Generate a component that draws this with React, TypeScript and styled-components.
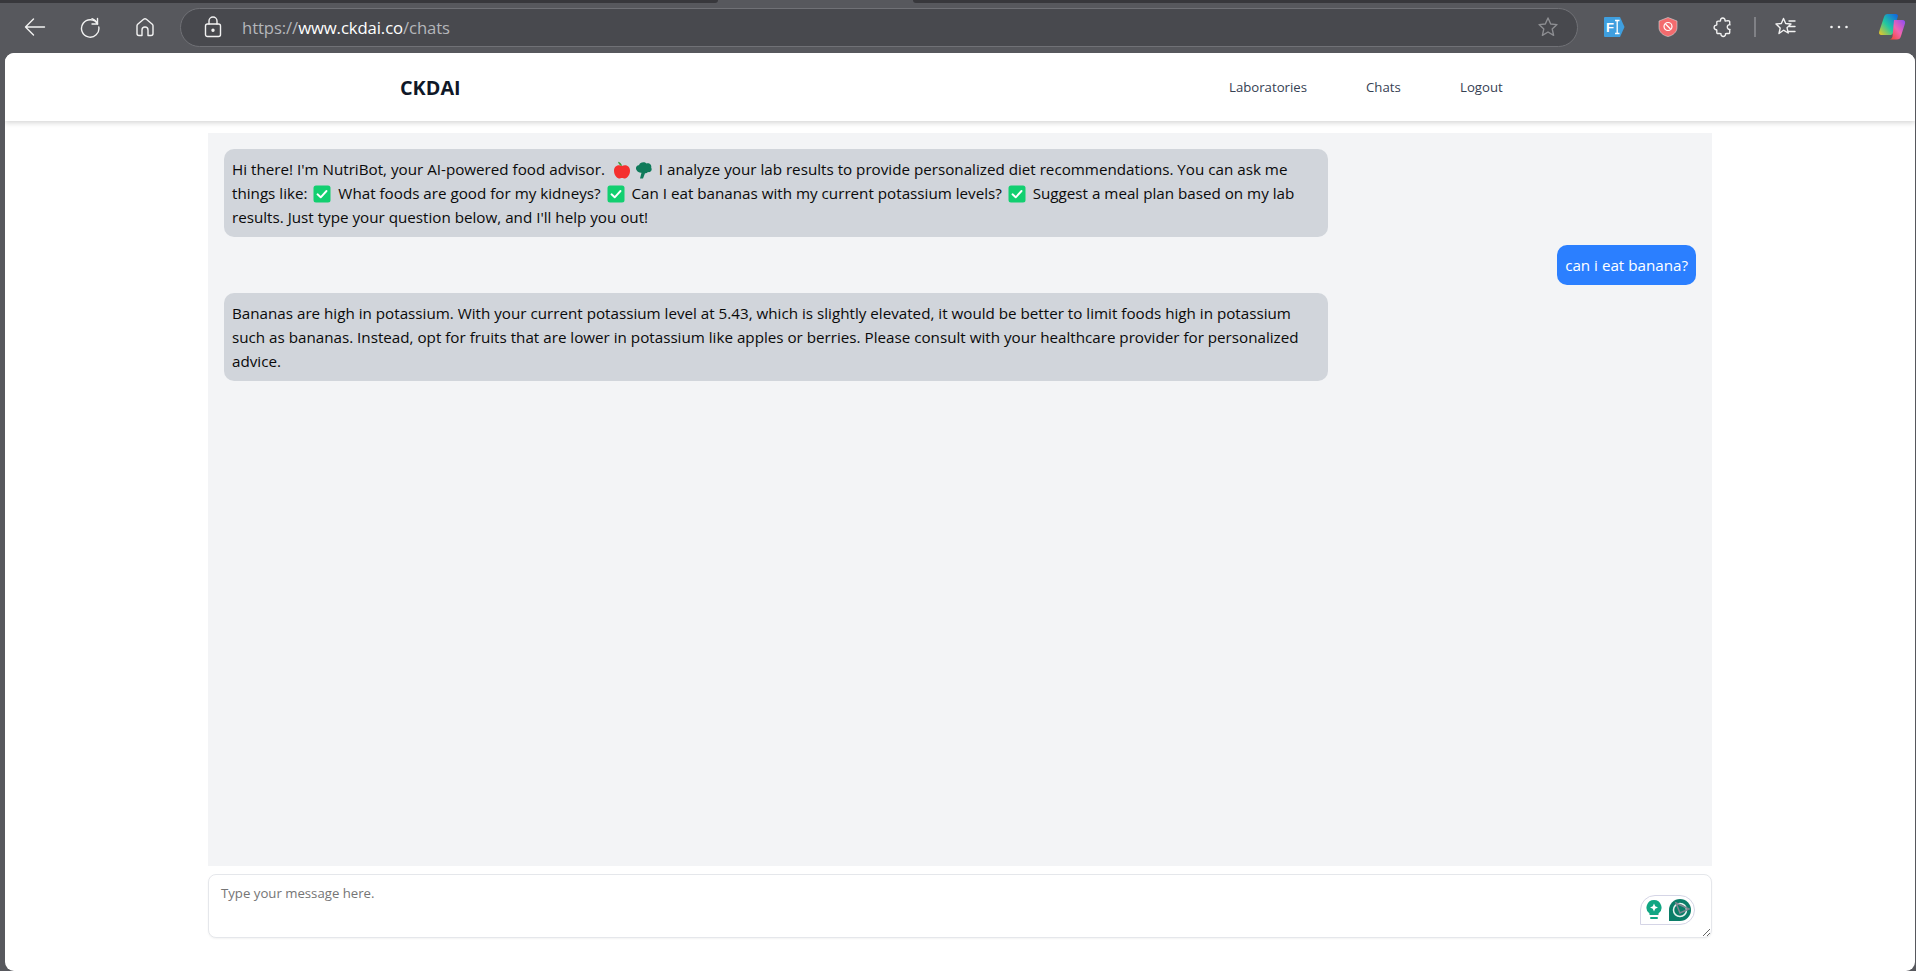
import React from "react";
import styled, { createGlobalStyle } from "styled-components";

const Global = createGlobalStyle`
  html, body { margin: 0; padding: 0; height: 100%; overflow: hidden; background: #57585d; }
  * { box-sizing: border-box; }
  #root { height: 100%; }
`;

const Shell = styled.div`
  height: 971px;
  display: flex;
  flex-direction: column;
  background: #57585d;
  font-family: "Open Sans", "Noto Sans", sans-serif;
`;
const TabStrip = styled.div`
  height: 3px;
  flex: none;
  display: flex;
  justify-content: space-between;
`;
const InactiveTab = styled.div<{ $right?: boolean }>`
  width: ${(p) => (p.$right ? 1003 : 718)}px;
  height: 3px;
  background: #38383c;
  border-radius: ${(p) => (p.$right ? "0 0 0 4px" : "0 0 4px 0")};
`;
const Toolbar = styled.div`
  height: 50px;
  flex: none;
  display: flex;
  align-items: center;
  padding: 0 10px 2px 24px;
`;
const NavIcon = styled.svg<{ $ml?: number }>`
  flex: none;
  margin-left: ${(p) => p.$ml ?? 0}px;
  fill: none;
  stroke: ${(p) => p.color || "#f2f2f2"};
  stroke-width: 1.4;
  stroke-linecap: round;
  stroke-linejoin: round;
`;
const ExtIcon = styled.svg<{ $ml: number }>`
  flex: none;
  margin-left: ${(p) => p.$ml}px;
`;
const AddressBar = styled.div`
  flex: none;
  width: 1398px;
  height: 39px;
  margin-left: 25px;
  border: 1.5px solid #707176;
  border-radius: 20px;
  background: #48494e;
  display: flex;
  align-items: center;
  padding: 0 18px 0 23px;
`;
const Url = styled.div`
  flex: 1;
  margin-left: 20px;
  font-size: 16.7px;
  color: #b4b6ba;
  letter-spacing: -0.1px;
`;
const UrlHost = styled.span`
  color: #ffffff;
`;
const Divider = styled.div`
  flex: none;
  width: 2px;
  height: 20px;
  margin-left: 21px;
  background: #808186;
`;
const Page = styled.div`
  flex: 1;
  min-height: 0;
  margin-left: 5px;
  margin-right: 1px;
  background: #ffffff;
  border-radius: 9px;
  display: flex;
  flex-direction: column;
  overflow: hidden;
`;
const TopNav = styled.nav`
  flex: none;
  height: 68px;
  display: flex;
  align-items: center;
  padding-left: 395px;
  background: #fff;
  box-shadow: 0 2px 5px rgba(0, 0, 0, 0.16);
`;
const Brand = styled.div`
  font-size: 19.8px;
  font-weight: 700;
  color: #101828;
  width: 829px;
`;
const NavLink = styled.a<{ $w: number }>`
  width: ${(p) => p.$w}px;
  font-size: 13.2px;
  color: #364153;
`;
const Main = styled.main`
  flex: 1;
  min-height: 0;
  width: 1504px;
  margin-left: 203px;
  padding-top: 12px;
  display: flex;
  flex-direction: column;
`;
const Messages = styled.div`
  height: 733px;
  flex: none;
  background: #f3f4f6;
  padding: 16px;
  display: flex;
  flex-direction: column;
  gap: 8px;
`;
const Bubble = styled.div<{ $user?: boolean }>`
  max-width: 75%;
  align-self: ${(p) => (p.$user ? "flex-end" : "flex-start")};
  background: ${(p) => (p.$user ? "#2b7fff" : "#d1d5db")};
  color: ${(p) => (p.$user ? "#ffffff" : "#0a0a0a")};
  border-radius: 10px;
  padding: 8px;
  font-size: 15.2px;
  line-height: 24px;
`;
const Emoji = styled.svg<{ $ml: number; $mr: number }>`
  display: inline-block;
  width: 18px;
  height: 18px;
  margin: 0 ${(p) => p.$mr}px 0 ${(p) => p.$ml}px;
  vertical-align: -4px;
`;
const InputWrap = styled.div`
  position: relative;
  margin-top: 8px;
  height: 64px;
`;
const Input = styled.textarea`
  display: block;
  width: 100%;
  height: 64px;
  border: 1px solid #e5e7eb;
  border-radius: 8px;
  padding: 8px 12px;
  font: 13.2px/20px "Open Sans", sans-serif;
  outline: none;
  background: #fff;
  box-shadow: 0 1px 2px rgba(0, 0, 0, 0.05);
  &::placeholder { color: #757575; opacity: 1; }
`;
const Grammarly = styled.div`
  position: absolute;
  right: 17px;
  top: 21px;
  width: 55px;
  height: 30px;
  background: #fff;
  border: 1px solid #d5d5e6;
  border-radius: 15px 15px 15px 0;
  display: flex;
  align-items: center;
  justify-content: flex-end;
  gap: 7px;
  padding-right: 3px;
`;

const Apple = () => (
  <Emoji $ml={4} $mr={-1} viewBox="0 0 18 18">
    <path d="M9 5C6.500 3.600 1 4 1 9.800c0 4 2.800 7.700 5 7.700 1.200 0 2-.5 3-.5s1.800.5 3 .5c2.200 0 5-3.700 5-7.700C17 4 11.500 3.600 9 5z" fill="#f5302e" />
    <path d="M9 5C8.700 3 7.200 1.300 5 .8 5.300 3 7 4.600 9 5z" fill="#3f9b3a" />
  </Emoji>
);
const Broccoli = () => (
  <Emoji $ml={1} $mr={2} viewBox="0 0 18 18">
    <path d="M1.500 9C.2 6.700 1.700 4 4 4.200 4.500 1.300 9.500 0 11.500 2.500c2.700-1 5.500 1.500 4.700 4.300 1.500 2.200-.8 5-3.200 4.200-.7 1-1.800 1.300-3 1.300L8 17.500H5l1.500-5.800C4.200 11.800 2.500 11 1.500 9z" fill="#0f7a5a" />
  </Emoji>
);
const Check = () => (
  <Emoji $ml={2} $mr={3} viewBox="0 0 18 18">
    <rect x="0.500" y="0.500" width="17" height="17" rx="2.500" fill="#12cf70" />
    <path d="M4.500 9.300l3.200 3 5.800-6.300" fill="none" stroke="#fff" strokeWidth="1.900" strokeLinecap="round" strokeLinejoin="round" />
  </Emoji>
);

export default function App() {
  return (
    <>
      <Global />
      <Shell>
        <TabStrip>
          <InactiveTab />
          <InactiveTab $right />
        </TabStrip>
        <Toolbar>
          <NavIcon width="22" height="20" viewBox="0 0 22 20"><path d="M1.500 10h19M9.500 2l-8 8 8 8" /></NavIcon>
          <NavIcon $ml={33} width="22" height="22" viewBox="0 0 22 22"><path d="M18.500 2.500v5.500h-5.500M18.700 8A8.700 8.700 0 1 0 19.800 11" /><path d="M13 2.700A8.700 8.700 0 0 1 18.500 8" /></NavIcon>
          <NavIcon $ml={34} width="20" height="20" viewBox="0 0 20 20"><path d="M2 8.800c0-.6.300-1.100.7-1.500L8.600 2.300a2.200 2.200 0 0 1 2.800 0l5.900 5c.4.400.7.900.7 1.500v7.700a2 2 0 0 1-2 2H13v-5.500a3 3 0 0 0-6 0v5.500H4a2 2 0 0 1-2-2z" /></NavIcon>
          <AddressBar>
            <NavIcon width="18" height="22" viewBox="0 0 18 22"><rect x="1.500" y="8" width="15" height="12.500" rx="2" /><path d="M5 8V5a4 4 0 0 1 8 0v3" /><circle cx="9" cy="14.300" r="1" fill="#f2f2f2" /></NavIcon>
            <Url>https://<UrlHost>www.ckdai.co</UrlHost>/chats</Url>
            <NavIcon color="#8d8e92" width="22" height="22" viewBox="0 0 22 22"><path d="m11 2 2.700 6 6.300.6-4.800 4.300 1.400 6.400L11 16l-5.600 3.300 1.400-6.400L2 8.600 8.300 8z" /></NavIcon>
          </AddressBar>
          <ExtIcon $ml={25} width="22" height="22" viewBox="0 0 22 22">
            <path d="M2 1h15l4.500 10L17 21H2a1 1 0 0 1-1-1V2a1 1 0 0 1 1-1z" fill="#3f9fdf" />
            <text x="3" y="16" fontFamily="Liberation Sans" fontWeight="700" fontSize="13" fill="#fff">F</text>
            <path d="M12 4.500h4.500M12 17.500h4.500M14.200 4.500v13" stroke="#fff" strokeWidth="1.300" fill="none" />
          </ExtIcon>
          <ExtIcon $ml={33} width="20" height="22" viewBox="0 0 20 22">
            <path d="M10 1.500 19 5v6.500c0 4.500-4 8-9 9-5-1-9-4.500-9-9V5z" fill="#f36b6e" stroke="#d8d8d8" strokeWidth=".6" />
            <circle cx="10" cy="10.500" r="4" fill="none" stroke="#fff" strokeWidth="1.200" />
            <path d="m7.500 8 5 5" stroke="#fff" strokeWidth="1.200" />
          </ExtIcon>
          <NavIcon $ml={35} width="20" height="22" viewBox="0 0 20 22"><path d="M7.500 4.800C6.800 1 12.700 1 12 4.800c0 .6 3.800-.6 4.500.4.700.8-.3 2.800.5 3.500-3.600-.5-3.600 5.200 0 4.700-.8.800.2 3-.5 3.800-.8.900-3.300-.2-4 .6.500 3.600-5 3.600-4.500 0-.8-.8-3.300.3-4-.6-.7-.8.300-2.700-.4-3.500-3.300.4-3.300-5 0-4.600.7-.8-.3-3 .4-3.700.8-.8 3 .2 3.500-.6z" /></NavIcon>
          <Divider />
          <NavIcon $ml={18} width="22" height="22" viewBox="0 0 22 22"><path d="m9.500 2.500 2.200 5 5.300.5-4 3.700 1.200 5.300-4.700-2.800L5 17.500 6.200 12 2 8l5.300-.5zM15 5h6M15.500 10.500H21M14.500 15.500H21" /></NavIcon>
          <NavIcon $ml={33} width="20" height="6" viewBox="0 0 20 6"><path d="M2.500 3h.01M10 3h.01M17.500 3h.01" strokeWidth="2.600" /></NavIcon>
          <ExtIcon $ml={29} width="28" height="28" viewBox="0 0 28 28">
            <defs>
              <linearGradient id="cpA" x1="0" y1="1" x2="1" y2="0"><stop offset="0" stopColor="#f8c51e" /><stop offset=".45" stopColor="#22c8a0" /><stop offset="1" stopColor="#0f5fe8" /></linearGradient>
              <linearGradient id="cpB" x1="0" y1="1" x2="1" y2="0"><stop offset="0" stopColor="#f5421f" /><stop offset=".5" stopColor="#f265b0" /><stop offset="1" stopColor="#8a4cf5" /></linearGradient>
            </defs>
            <path d="M9.500 1h8c1.800 0 2.800 1 2.300 2.500L15 20c-.5 1.500-1.500 2-3 2H3.500C1.500 22 .6 20.500 1.200 18.500L6 4c.5-2 1.800-3 3.500-3z" fill="url(#cpA)" />
            <path d="M16 7h8.500c2 0 3 1.500 2.500 3.500L23 23c-.5 2.500-2 3.500-4 3.500h-8c2 0 3-1 3.500-3z" fill="url(#cpB)" />
          </ExtIcon>
        </Toolbar>
        <Page>
          <TopNav>
            <Brand>CKDAI</Brand>
            <NavLink $w={137}>Laboratories</NavLink>
            <NavLink $w={94}>Chats</NavLink>
            <NavLink $w={60}>Logout</NavLink>
          </TopNav>
          <Main>
            <Messages>
              <Bubble>
                Hi there! I'm NutriBot, your AI-powered food advisor. <Apple /> <Broccoli /> I analyze your lab results to provide personalized diet recommendations. You can ask me things like: <Check /> What foods are good for my kidneys? <Check /> Can I eat bananas with my current potassium levels? <Check /> Suggest a meal plan based on my lab results. Just type your question below, and I'll help you out!
              </Bubble>
              <Bubble $user>can i eat banana?</Bubble>
              <Bubble>
                Bananas are high in potassium. With your current potassium level at 5.43, which is slightly elevated, it would be better to limit foods high in potassium such as bananas. Instead, opt for fruits that are lower in potassium like apples or berries. Please consult with your healthcare provider for personalized advice.
              </Bubble>
            </Messages>
            <InputWrap>
              <Input placeholder="Type your message here." />
              <Grammarly>
                <svg width="16" height="20" viewBox="0 0 16 20">
                  <path d="M8 0a7.500 7.500 0 0 1 4.500 13.500V15h-9v-1.500A7.500 7.500 0 0 1 8 0z" fill="#11a683" />
                  <path d="M8 3.500 9.200 6.300 12 7.500 9.200 8.700 8 11.500 6.800 8.700 4 7.500 6.800 6.300z" fill="#fff" />
                  <rect x="4" y="17" width="8" height="2" rx="1" fill="#11a683" />
                </svg>
                <svg width="22" height="22" viewBox="0 0 22 22">
                  <path d="M11 0a11 11 0 0 1 0 22H0V11A11 11 0 0 1 11 0z" fill="#0b7d68" />
                  <circle cx="11" cy="11" r="6.500" fill="none" stroke="#e8f2ef" strokeWidth="1.500" />
                  <path d="m7 4 13 6-9 4z" fill="none" stroke="#7d8590" strokeWidth="1.500" />
                </svg>
              </Grammarly>
            </InputWrap>
          </Main>
        </Page>
      </Shell>
    </>
  );
}
